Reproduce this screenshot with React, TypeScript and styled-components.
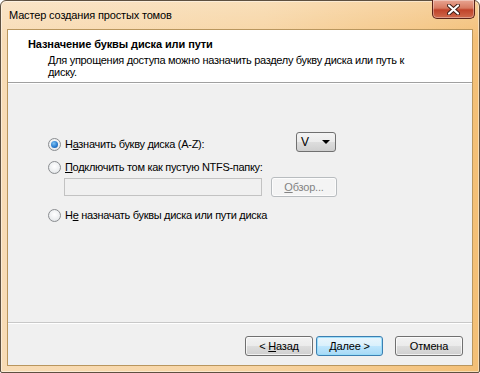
import React from 'react';
import styled, {createGlobalStyle} from 'styled-components';

const GlobalStyle = createGlobalStyle`
  html, body {
    margin: 0;
    padding: 0;
    background: #ffffff;
  }
  body {
    font-family: "Liberation Sans", Arial, sans-serif;
    font-size: 11px;
    color: #000;
  }
`

const Window = styled.div`
  box-sizing: border-box;
  width: 480px;
  height: 373px;
  border: 1px solid #5e5040;
  border-radius: 6px 6px 2px 2px;
  background:
    linear-gradient(to bottom, rgba(255,255,255,0.25), rgba(255,255,255,0) 40px),
    linear-gradient(to right, #f8dcb6 0%, #f7d4a2 55%, #f3bf76 100%);
  padding: 0 6px 6px 6px;
  display: flex;
  flex-direction: column;
  box-shadow: inset 0 0 0 1px rgba(255,255,255,0.45);
`

const TitleBar = styled.div`
  height: 28px;
  display: flex;
  align-items: flex-start;
`

const Title = styled.div`
  margin-top: 8px;
  padding-left: 2px;
  font-size: 11px;
  letter-spacing: -0.15px;
  color: #000;
`

const CloseButton = styled.div`
  margin-left: auto;
  margin-right: -2px;
  margin-top: -1px;
  width: 43px;
  height: 19px;
  box-sizing: border-box;
  border: 1px solid #5a2318;
  border-top: none;
  border-radius: 0 0 5px 5px;
  background: linear-gradient(to bottom, #e8a592 0%, #d77a61 45%, #c0432a 55%, #cf6a4c 100%);
  box-shadow: inset 0 0 0 1px rgba(255,255,255,0.35);
  display: flex;
  align-items: center;
  justify-content: center;
`

const Client = styled.div`
  flex: 1;
  display: flex;
  flex-direction: column;
  border: 1px solid #b9965e;
  background: #f0f0f0;
  min-height: 0;
`

const Header = styled.div`
  height: 53px;
  box-sizing: border-box;
  background: #ffffff;
  border-bottom: 1px solid #a0a0a0;
  padding: 6px 0 0 20px;
`

const HeaderTitle = styled.div`
  font-weight: bold;
  font-size: 11px;
  letter-spacing: -0.1px;
  line-height: 16px;
`

const HeaderText = styled.div`
  margin-left: 20px;
  width: 360px;
  font-size: 11px;
  letter-spacing: -0.3px;
  line-height: 12px;
  margin-top: 2px;
`

const Body = styled.div`
  flex: 1;
  border-top: 1px solid #ffffff;
  padding: 50px 0 0 40px;
  display: flex;
  flex-direction: column;
`

const OptionRow = styled.div<{gap?: number}>`
  display: flex;
  align-items: center;
  height: 20px;
  margin-top: ${p => p.gap ?? 0}px;
`

const Radio = styled.span<{checked?: boolean}>`
  box-sizing: border-box;
  width: 13px;
  height: 13px;
  border-radius: 50%;
  border: 1px solid #8a8d90;
  background: radial-gradient(circle at 50% 40%, #ffffff 0%, #eceef0 60%, #d4d7da 100%);
  display: flex;
  align-items: center;
  justify-content: center;
  margin-right: 4px;
  flex: none;
  &::after {
    content: "";
    display: ${p => p.checked ? 'block' : 'none'};
    width: 7px;
    height: 7px;
    border-radius: 50%;
    background: radial-gradient(circle at 40% 35%, #7fc3f2 0%, #2a7dd0 55%, #174f96 100%);
  }
`

const Label = styled.span<{disabled?: boolean}>`
  font-size: 11px;
  letter-spacing: -0.3px;
  color: ${p => p.disabled ? '#8a8a8a' : '#000'};
  u {
    text-decoration: underline;
  }
`

const Select = styled.div`
  box-sizing: border-box;
  margin-left: auto;
  margin-right: 136px;
  margin-top: -4px;
  width: 40px;
  height: 20px;
  border: 1px solid #707070;
  border-radius: 3px;
  background: linear-gradient(to bottom, #f4f4f4 0%, #ebebeb 50%, #dddddd 51%, #cfcfcf 100%);
  display: flex;
  align-items: center;
  justify-content: space-between;
  padding: 0 5px 0 4px;
  font-size: 12px;
`

const Arrow = styled.span`
  width: 0;
  height: 0;
  border-left: 4px solid transparent;
  border-right: 4px solid transparent;
  border-top: 4px solid #000;
`

const PathRow = styled.div`
  display: flex;
  align-items: center;
  margin-left: 16px;
  margin-top: 0px;
  gap: 9px;
`

const PathInput = styled.div`
  box-sizing: border-box;
  width: 198px;
  height: 18px;
  border: 1px solid #c2c2c2;
  background: #f0f0f0;
`

const Button = styled.div<{primary?: boolean; disabled?: boolean; width?: number}>`
  box-sizing: border-box;
  width: ${p => p.width ?? 68}px;
  height: 20px;
  border-radius: 3px;
  border: 1px solid ${p => p.primary ? '#3c7fb1' : p.disabled ? '#b8bcbf' : '#707070'};
  background: ${p => p.primary
    ? 'linear-gradient(to bottom, #eaf6fd 0%, #d9f0fc 50%, #bee6fd 51%, #a7d9f5 100%)'
    : p.disabled
      ? '#f4f4f4'
      : 'linear-gradient(to bottom, #f2f2f2 0%, #ebebeb 50%, #dddddd 51%, #cfcfcf 100%)'};
  box-shadow: inset 0 0 0 1px ${p => p.primary ? 'rgba(150,220,250,0.9)' : 'rgba(255,255,255,0.7)'};
  color: ${p => p.disabled ? '#838383' : '#000'};
  font-size: 11px;
  letter-spacing: -0.2px;
  display: flex;
  align-items: center;
  justify-content: center;
`

const Footer = styled.div`
  height: 43px;
  box-sizing: border-box;
  border-top: 1px solid #c8c8c8;
  box-shadow: inset 0 1px 0 #ffffff;
  display: flex;
  justify-content: flex-end;
  align-items: flex-start;
  padding: 13px 9px 0 0;
`

const ButtonGroup = styled.div`
  display: flex;
  gap: 3px;
  margin-right: 12px;
`

export default function App() {
  return (
    <>
      <GlobalStyle />
      <Window>
        <TitleBar>
          <Title>Мастер создания простых томов</Title>
          <CloseButton>
            <svg width="13" height="11" viewBox="0 0 13 11">
              <path d="M2 1.5 L11 9.5 M11 1.5 L2 9.5" stroke="#3a1a12" strokeWidth="4" strokeLinecap="round" />
              <path d="M2 1.5 L11 9.5 M11 1.5 L2 9.5" stroke="#ffffff" strokeWidth="2.2" strokeLinecap="round" />
            </svg>
          </CloseButton>
        </TitleBar>
        <Client>
          <Header>
            <HeaderTitle>Назначение буквы диска или пути</HeaderTitle>
            <HeaderText>
              Для упрощения доступа можно назначить разделу букву диска или путь к диску.
            </HeaderText>
          </Header>
          <Body>
            <OptionRow>
              <Radio checked />
              <Label>Н<u>а</u>значить букву диска (A-Z):</Label>
              <Select>
                <span>V</span>
                <Arrow />
              </Select>
            </OptionRow>
            <OptionRow gap={3}>
              <Radio />
              <Label><u>П</u>одключить том как пустую NTFS-папку:</Label>
            </OptionRow>
            <PathRow>
              <PathInput />
              <Button disabled width={66}><span><u>О</u>бзор...</span></Button>
            </PathRow>
            <OptionRow gap={8}>
              <Radio />
              <Label>Н<u>е</u> назначать буквы диска или пути диска</Label>
            </OptionRow>
          </Body>
          <Footer>
            <ButtonGroup>
              <Button><span>&lt; <u>Н</u>азад</span></Button>
              <Button primary width={67}>Далее &gt;</Button>
            </ButtonGroup>
            <Button>Отмена</Button>
          </Footer>
        </Client>
      </Window>
    </>
  );
}
